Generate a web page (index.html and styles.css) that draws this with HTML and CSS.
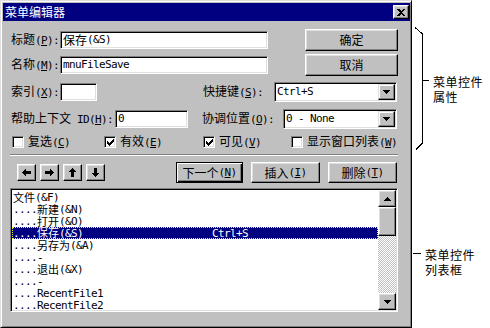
FILE: index.html
```html
<!DOCTYPE html>
<html lang="zh-CN">
<head>
<meta charset="utf-8">
<title>菜单编辑器</title>
<link rel="stylesheet" href="styles.css">
</head>
<body>
<div class="page">
  <div class="dialog">
    <div class="titlebar">
      <span class="title">菜单编辑器</span>
      <span class="close"><svg width="8" height="7" viewBox="0 0 8 7" shape-rendering="crispEdges"><path d="M0 0h2l2 2 2-2h2L5 3.5 8 7H6L4 5 2 7H0l3-3.5z" fill="#000"/></svg></span>
    </div>
    <div class="body">
      <div class="row r1">
        <div class="lbl w-l1">标题<span class="m">(<u>P</u>):</span></div>
        <div class="field w-f1">保存<span class="m">(&amp;S)</span></div>
        <div class="btn bside">确定</div>
      </div>
      <div class="row r2">
        <div class="lbl w-l1">名称<span class="m">(<u>M</u>):</span></div>
        <div class="field w-f1"><span class="m">mnuFileSave</span></div>
        <div class="btn bside">取消</div>
      </div>
      <div class="row r3">
        <div class="lbl w-l1">索引<span class="m">(<u>X</u>):</span></div>
        <div class="field w-f3"></div>
        <div class="lbl w-l3">快捷键<span class="m">(<u>S</u>):</span></div>
        <div class="combo w-c3">
          <div class="ctext"><span class="m">Ctrl+S</span></div>
          <div class="dbtn"><svg width="7" height="4" viewBox="0 0 7 4" shape-rendering="crispEdges"><path d="M0 0h7v1H6v1H5v1H4v1H3V3H2V2H1V1H0z" fill="#000"/></svg></div>
        </div>
      </div>
      <div class="row r4">
        <div class="lbl w-l4">帮助上下文<span class="m"> ID(<u>H</u>):</span></div>
        <div class="field w-f4"><span class="m">0</span></div>
        <div class="lbl w-l4b">协调位置<span class="m">(<u>O</u>):</span></div>
        <div class="combo w-c4">
          <div class="ctext"><span class="m">0 - None</span></div>
          <div class="dbtn"><svg width="7" height="4" viewBox="0 0 7 4" shape-rendering="crispEdges"><path d="M0 0h7v1H6v1H5v1H4v1H3V3H2V2H1V1H0z" fill="#000"/></svg></div>
        </div>
      </div>
      <div class="row r5">
        <div class="cb cb1"><span class="box"></span><span>复选<span class="m">(<u>C</u>)</span></span></div>
        <div class="cb cb2"><span class="box"><svg width="7" height="7" viewBox="0 0 7 7" shape-rendering="crispEdges"><path d="M6 0h1v3H6v1H5v1H4v1H3v1H2V6H1V5H0V2h1v1h1v1h1V3h1V2h1V1h1z" fill="#000"/></svg></span><span>有效<span class="m">(<u>E</u>)</span></span></div>
        <div class="cb cb3"><span class="box"><svg width="7" height="7" viewBox="0 0 7 7" shape-rendering="crispEdges"><path d="M6 0h1v3H6v1H5v1H4v1H3v1H2V6H1V5H0V2h1v1h1v1h1V3h1V2h1V1h1z" fill="#000"/></svg></span><span>可见<span class="m">(<u>V</u>)</span></span></div>
        <div class="cb cb4"><span class="box"></span><span>显示窗口列表<span class="m">(<u>W</u>)</span></span></div>
      </div>
      <div class="sep"></div>
      <div class="row r6">
        <div class="btn abtn"><svg width="9" height="7" viewBox="0 0 9 7" shape-rendering="crispEdges"><path d="M3 0h1v2h5v3H4v2H3V6H2V5H1V4H0V3h1V2h1V1h1z" fill="#000"/></svg></div>
        <div class="btn abtn"><svg width="9" height="7" viewBox="0 0 9 7" shape-rendering="crispEdges"><path d="M5 0h1v1h1v1h1v1h1v1H8v1H7v1H6v1H5V5H0V2h5z" fill="#000"/></svg></div>
        <div class="btn abtn"><svg width="7" height="9" viewBox="0 0 7 9" shape-rendering="crispEdges"><path d="M3 0h1v1h1v1h1v1h1v1H5v5H2V4H0V3h1V2h1V1h1z" fill="#000"/></svg></div>
        <div class="btn abtn"><svg width="7" height="9" viewBox="0 0 7 9" shape-rendering="crispEdges"><path d="M2 0h3v5h2v1H6v1H5v1H4v1H3V8H2V7H1V6H0V5h2z" fill="#000"/></svg></div>
        <div class="btn bdef">下一个<span class="m">(<u>N</u>)</span></div>
        <div class="btn bact">插入<span class="m">(<u>I</u>)</span></div>
        <div class="btn bact">删除<span class="m">(<u>T</u>)</span></div>
      </div>
      <div class="list">
        <div class="items">
          <div class="item">文件<span class="m">(&amp;F)</span></div>
          <div class="item"><span class="m">....</span>新建<span class="m">(&amp;N)</span></div>
          <div class="item"><span class="m">....</span>打开<span class="m">(&amp;O)</span></div>
          <div class="item sel"><span class="name"><span class="m">....</span>保存<span class="m">(&amp;S)</span></span><span class="m">Ctrl+S</span></div>
          <div class="item"><span class="m">....</span>另存为<span class="m">(&amp;A)</span></div>
          <div class="item"><span class="m">....-</span></div>
          <div class="item"><span class="m">....</span>退出<span class="m">(&amp;X)</span></div>
          <div class="item"><span class="m">....-</span></div>
          <div class="item"><span class="m">....RecentFile1</span></div>
          <div class="item"><span class="m">....RecentFile2</span></div>
        </div>
        <div class="sb">
          <div class="btn sbtn"><svg width="7" height="4" viewBox="0 0 7 4" shape-rendering="crispEdges"><path d="M3 0h1v1h1v1h1v1h1v1H0V3h1V2h1V1h1z" fill="#000"/></svg></div>
          <div class="btn thumb"></div>
          <div class="track"></div>
          <div class="btn sbtn"><svg width="7" height="4" viewBox="0 0 7 4" shape-rendering="crispEdges"><path d="M0 0h7v1H6v1H5v1H4v1H3V3H2V2H1V1H0z" fill="#000"/></svg></div>
        </div>
      </div>
    </div>
  </div>
  <div class="notes">
    <div class="note note1">
      <svg class="brace" width="18" height="123" viewBox="0 0 18 123" shape-rendering="crispEdges"><path d="M2 0.5L9.5 7V116L3 122.5M9.5 53.5H16" fill="none" stroke="#000" stroke-width="1"/></svg>
      <div class="note-text">菜单控件<br>属性</div>
    </div>
    <div class="note note2">
      <svg class="dash" width="12" height="15" viewBox="0 0 12 15" shape-rendering="crispEdges"><path d="M0 6.5H8" fill="none" stroke="#000" stroke-width="1"/></svg>
      <div class="note-text">菜单控件<br>列表框</div>
    </div>
  </div>
</div>
</body>
</html>
```

FILE: styles.css
```css
* { box-sizing: border-box; }

body {
  margin: 0;
  background: #fff;
  color: #000;
  font-family: "Noto Sans CJK SC", "Noto Sans", sans-serif;
  font-size: 12px;
  line-height: 12px;
}

.m {
  font-family: "DejaVu Sans Mono", "Liberation Mono", monospace;
  font-size: 11px;
  letter-spacing: -0.62px;
}

u { text-decoration: underline; text-underline-offset: 1px; }

.page {
  display: flex;
  width: 490px;
  height: 328px;
  overflow: hidden;
}

.dialog {
  flex: none;
  width: 412px;
  height: 328px;
  background: #c0c0c0;
  border: 1px solid;
  border-color: #dfdfdf #000 #000 #dfdfdf;
  box-shadow: inset 1px 1px #fff, inset -1px -1px #808080;
  padding: 2px 0 0 2px;
  overflow: hidden;
}

.titlebar {
  width: 407px;
  height: 18px;
  background: #000080;
  color: #fff;
  display: flex;
  align-items: center;
  justify-content: space-between;
  padding: 0 1px 0 2px;
}

.close {
  width: 16px;
  height: 14px;
  background: #c0c0c0;
  border: 1px solid;
  border-color: #fff #000 #000 #fff;
  box-shadow: inset -1px -1px #808080, inset 1px 1px #dfdfdf;
  display: flex;
  align-items: center;
  justify-content: center;
}

.body { padding: 8px 0 0 8px; }

.row { display: flex; align-items: center; }
.r1 { height: 22px; }
.r2 { height: 22px; margin-top: 3px; }
.r3 { height: 20px; margin-top: 6px; }
.r4 { height: 20px; margin-top: 7px; }
.r5 { height: 12px; margin-top: 7px; }
.r6 { height: 21px; margin-top: 6px; }

.lbl { flex: none; white-space: nowrap; }
.w-l1 { width: 49px; }
.w-l3 { width: 71px; margin-left: 106px; }
.w-l4 { width: 104px; }
.w-l4b { width: 81px; margin-left: 14px; }

.field {
  flex: none;
  height: 18px;
  background: #fff;
  border: 1px solid;
  border-color: #808080 #fff #fff #808080;
  box-shadow: inset 1px 1px #000, inset -1px -1px #dfdfdf;
  padding: 0 2px;
  display: flex;
  align-items: center;
  white-space: nowrap;
}
.w-f1 { width: 208px; }
.w-f3 { width: 37px; }
.w-f4 { width: 73px; }

.combo {
  flex: none;
  height: 20px;
  background: #fff;
  border: 1px solid;
  border-color: #808080 #fff #fff #808080;
  box-shadow: inset 1px 1px #000, inset -1px -1px #dfdfdf;
  padding: 1px;
  display: flex;
}
.w-c3 { width: 123px; }
.w-c4 { width: 114px; }
.ctext {
  flex: 1;
  display: flex;
  align-items: center;
  padding-left: 1px;
  white-space: nowrap;
}
.dbtn {
  width: 17px;
  background: #c0c0c0;
  border: 1px solid;
  border-color: #dfdfdf #000 #000 #dfdfdf;
  box-shadow: inset -1px -1px #808080, inset 1px 1px #fff;
  display: flex;
  align-items: center;
  justify-content: center;
}

.btn {
  flex: none;
  background: #c0c0c0;
  border: 1px solid;
  border-color: #fff #000 #000 #fff;
  box-shadow: inset -1px -1px #808080, inset 1px 1px #dfdfdf;
  display: flex;
  align-items: center;
  justify-content: center;
  white-space: nowrap;
}
.bside { width: 93px; height: 22px; margin-left: 37px; }

.cb { flex: none; display: flex; align-items: center; gap: 4px; white-space: nowrap; }
.cb1 { width: 92px; margin-left: 1px; }
.cb2 { width: 99px; }
.cb3 { width: 88px; }
.box {
  width: 12px;
  height: 12px;
  background: #fff;
  border: 1px solid;
  border-color: #808080 #fff #fff #808080;
  box-shadow: inset 1px 1px #000, inset -1px -1px #dfdfdf;
  display: flex;
  align-items: center;
  justify-content: center;
}

.sep {
  width: 388px;
  height: 2px;
  margin: 6px 0 0 -1px;
  border-top: 1px solid #808080;
  border-bottom: 1px solid #fff;
}

.abtn { width: 19px; height: 17px; margin-right: 4px; }
.abtn:first-child { margin-left: 6px; }
.abtn:nth-child(4) { margin-right: 0; }
.bdef {
  width: 67px;
  height: 21px;
  margin-left: 71px;
  border-color: #000;
  box-shadow: inset 1px 1px #fff, inset -1px -1px #000, inset -2px -2px #808080;
}
.bact { width: 69px; height: 21px; margin-left: 8px; }

.list {
  width: 388px;
  height: 124px;
  margin: 5px 0 0 -1px;
  background: #fff;
  border: 1px solid;
  border-color: #808080 #fff #fff #808080;
  box-shadow: inset 1px 1px #000, inset -1px -1px #dfdfdf;
  padding: 1px;
  display: flex;
  overflow: hidden;
}
.items { flex: 1; padding-top: 1px; font-size: 11px; line-height: 11px; }
.item {
  height: 12px;
  display: flex;
  align-items: center;
  padding-left: 1px;
  white-space: nowrap;
}
.sel {
  background: #000080;
  color: #fff;
  outline: 1px dotted #ffff00;
  outline-offset: -1px;
}
.name { width: 199px; flex: none; }

.sb { width: 18px; display: flex; flex-direction: column; }
.sbtn { height: 17px; }
.thumb { height: 29px; }
.track {
  flex: 1;
  background: repeating-conic-gradient(#c0c0c0 0 25%, #fff 0 50%) 0 0 / 2px 2px;
}

.notes {
  flex: none;
  display: flex;
  flex-direction: column;
  padding: 27px 0 0 1px;
  font-size: 12px;
  letter-spacing: 0.5px;
}
.note { display: flex; }
.note1 { align-items: center; }
.note1 .note-text { margin-left: 2px; }
.note2 { margin-top: 97px; align-items: flex-start; }
.note-text { line-height: 15px; white-space: nowrap; }
.brace, .dash { flex: none; }
```
